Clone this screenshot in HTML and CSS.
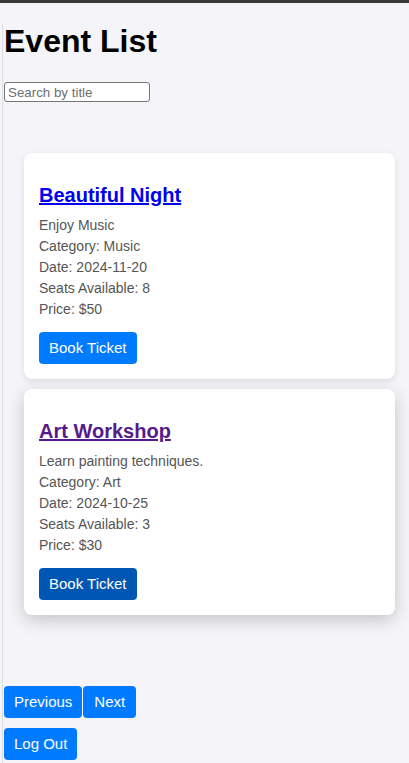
FILE: index.html
```html
<!DOCTYPE html>
<html lang="en">
<head>
<meta charset="utf-8">
<title>Event List</title>
<link rel="stylesheet" href="styles.css">
</head>
<body>
<div class="topbar"></div>
<div class="page">
  <h1 class="page-title">Event List</h1>
  <input class="search" type="text" placeholder="Search by title">
  <div class="event-list">
    <div class="event-card">
      <h3 class="event-title"><a href="#" class="link">Beautiful Night</a></h3>
      <p class="event-line">Enjoy Music</p>
      <p class="event-line">Category: Music</p>
      <p class="event-line">Date: 2024-11-20</p>
      <p class="event-line">Seats Available: 8</p>
      <p class="event-line">Price: $50</p>
      <div class="card-actions"><button class="btn">Book Ticket</button></div>
    </div>
    <div class="event-card event-card--hover">
      <h3 class="event-title"><a href="#" class="link link--visited">Art Workshop</a></h3>
      <p class="event-line">Learn painting techniques.</p>
      <p class="event-line">Category: Art</p>
      <p class="event-line">Date: 2024-10-25</p>
      <p class="event-line">Seats Available: 3</p>
      <p class="event-line">Price: $30</p>
      <div class="card-actions"><button class="btn btn--active">Book Ticket</button></div>
    </div>
  </div>
  <div class="pagination">
    <button class="btn">Previous</button><button class="btn btn--wide">Next</button>
  </div>
  <div class="logout">
    <button class="btn">Log Out</button>
  </div>
</div>
</body>
</html>
```
FILE: styles.css
```css
html, body {
  margin: 0;
  padding: 0;
}
body {
  background: #f4f4f9;
  font-family: "Liberation Sans", Arial, sans-serif;
  color: #000;
}
.topbar {
  height: 3px;
  background: #3a3a3a;
}
.page {
  margin-left: 2px;
  border-left: 1px solid #dcdde3;
  padding-left: 1px;
  min-height: 760px;
}
.page-title {
  font-size: 32px;
  font-weight: bold;
  margin: 20px 0 22px;
  line-height: 37px;
}
.search {
  display: block;
  box-sizing: border-box;
  width: 146px;
  height: 20px;
  margin: 0;
  padding: 1px 3px;
  border: 1px solid #767676;
  border-radius: 3px;
  background: #fff;
  font-family: "Liberation Sans", Arial, sans-serif;
  font-size: 13.33px;
  color: #000;
}
.search::placeholder {
  color: #6e6e6e;
}
.event-list {
  display: flex;
  flex-direction: column;
  gap: 10px;
  padding: 51px 14px 0 20px;
}
.event-card {
  background: #fff;
  border-radius: 8px;
  padding: 15px;
  box-shadow: 0 2px 6px rgba(0, 0, 0, 0.1);
}
.event-card--hover {
  box-shadow: 0 5px 18px rgba(0, 0, 0, 0.2);
}
.event-title {
  font-size: 20px;
  font-weight: bold;
  line-height: 23px;
  margin: 16px 0 10px;
}
.link {
  color: #0000ee;
  text-decoration: underline;
}
.link--visited {
  color: #551a8b;
}
.event-line {
  margin: 5px 0;
  font-size: 14px;
  line-height: 16px;
  color: #555;
}
.event-title + .event-line {
  margin-top: 0;
}
.card-actions {
  margin-top: 15px;
  display: flex;
}
.btn {
  display: inline-block;
  background: #007bff;
  color: #fff;
  border: none;
  border-radius: 4px;
  padding: 7px 10px;
  font-family: "Liberation Sans", Arial, sans-serif;
  font-size: 15px;
  line-height: 18px;
  cursor: pointer;
}
.btn--wide {
  padding: 7px 11px;
}
.btn--active {
  background: #0056b3;
}
.pagination {
  display: flex;
  gap: 1px;
  margin-top: 71px;
}
.logout {
  display: flex;
  margin-top: 10px;
}
```
